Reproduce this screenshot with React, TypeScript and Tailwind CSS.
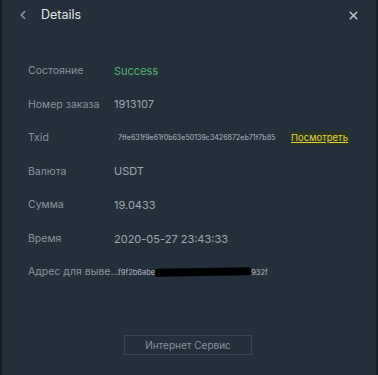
import { ChevronLeft, X } from "lucide-react";

const rows: { label: string; value: React.ReactNode }[] = [
  { label: "Состояние", value: <span className="text-[#4fb56f]">Success</span> },
  { label: "Номер заказа", value: "1913107" },
  {
    label: "Txid",
    value: (
      <div className="flex items-center">
        <span className="ml-[4px] text-[7.1px] text-[#b4bcc4]">7ffe631f9e61f0b63e50139c3426872eb71f7b85</span>
        <span className="ml-auto mr-[27px] text-[9.5px] text-[#e1d23c] underline bg-[#2a3426] px-[1px]">Посмотреть</span>
      </div>
    ),
  },
  { label: "Валюта", value: "USDT" },
  { label: "Сумма", value: "19.0433" },
  { label: "Время", value: "2020-05-27 23:43:33" },
  {
    label: "Адрес для выве...",
    value: (
      <div className="ml-[4px] flex items-center text-[7.5px] text-[#b4bcc4]">
        <span>f9f2b6abe</span>
        <span className="h-[8px] w-[96px] bg-black rounded-[2px] -skew-y-1" />
        <span>932f</span>
      </div>
    ),
  },
];

export default function App() {
  return (
    <div className="h-[375px] w-[378px] bg-[#232f3b] border-l-2 border-l-[#141d25] border-r-2 border-r-[#18212a] flex flex-col" style={{ fontFamily: "Inter, 'Noto Sans', sans-serif" }}>
      <div className="flex items-center h-[30px] pl-[14px] pr-[16px]">
        <ChevronLeft className="h-[14px] w-[14px] text-[#8f9aa5]" strokeWidth={2.5} />
        <span className="ml-[11px] text-[12.5px] text-[#e4e8ec]">Details</span>
        <X className="ml-auto h-[13px] w-[13px] text-[#b7c0c9]" strokeWidth={3} />
      </div>
      <div className="flex flex-col mt-[24px]">
        {rows.map((r) => (
          <div key={r.label} className="flex items-center h-[33.6px] pl-[26px]">
            <span className="w-[86px] text-[10.5px] text-[#8a949e] whitespace-nowrap">{r.label}</span>
            <div className="flex-1 text-[11px] text-[#9ea7b0]">{r.value}</div>
          </div>
        ))}
      </div>
      <div className="flex justify-center mt-[46px]">
        <button className="ml-[-2px] w-[128px] h-[20px] border border-[#3a4654] text-[10px] text-[#8894a0]">Интернет Сервис</button>
      </div>
    </div>
  );
}
